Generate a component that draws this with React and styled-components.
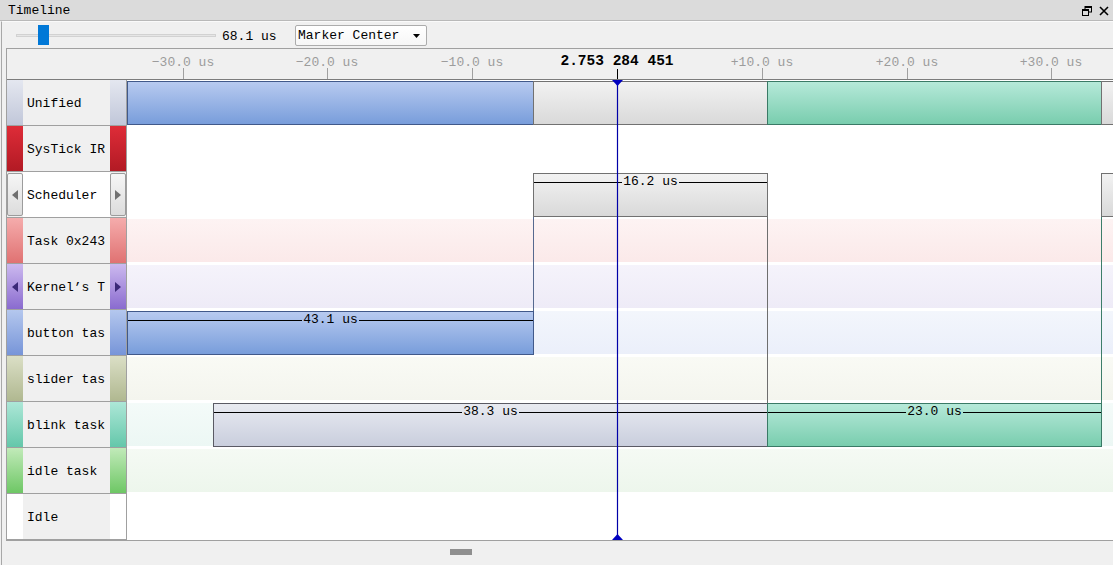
import styled, { createGlobalStyle } from 'styled-components';

const GlobalStyle = createGlobalStyle`
  html, body { margin: 0; padding: 0; background: #f0f0f0; }
  body {
    font-family: 'Liberation Mono', 'DejaVu Sans Mono', monospace;
    font-size: 13px;
    color: #000;
  }
  * { box-sizing: border-box; }
`;

// timeline scale: 10 us = 144.8 px, marker sits at canvas x 490
const PX_PER_US = 14.483;
const ORIGIN = 490;
const CANVAS_W = 986;
const xOf = (us) => Math.round(ORIGIN + us * PX_PER_US);

const BAR_COLORS = {
  blue: { top: '#b7caf0', bottom: '#789ddb', border: '#41598a' },
  grey: { top: '#f2f2f2', bottom: '#d9d9d9', border: '#717171' },
  teal: { top: '#b6e9d9', bottom: '#79cdae', border: '#3a7a66' },
  slate: { top: '#e8eaf1', bottom: '#c9cedd', border: '#5a5a64' },
};

const LANES = [
  {
    label: 'Unified',
    strip: ['#e4e7f0', '#c1c7d9'],
    bars: [
      { from: -48.9, to: -5.8, kind: 'blue' },
      { from: -5.8, to: 10.35, kind: 'grey' },
      { from: 10.35, to: 33.4, kind: 'teal' },
      { from: 33.4, to: 50, kind: 'grey' },
    ],
  },
  { label: 'SysTick IR', strip: ['#de2c38', '#b21a24'] },
  {
    label: 'Scheduler',
    boxed: true,
    arrows: '#707070',
    light: true,
    bars: [
      { from: -5.8, to: 10.35, kind: 'grey', text: '16.2 us' },
      { from: 33.4, to: 50, kind: 'grey' },
    ],
  },
  { label: 'Task 0x243', strip: ['#f5acac', '#e07272'], band: ['#fdf3f3', '#fbe9e9'] },
  {
    label: 'Kernel’s T',
    strip: ['#ccb9ef', '#8a6bcf'],
    arrows: '#3a2878',
    band: ['#f5f3fb', '#eeebf7'],
  },
  {
    label: 'button tas',
    strip: ['#b4c7ee', '#7795d8'],
    band: ['#f3f6fc', '#ebeffa'],
    bars: [{ from: -48.9, to: -5.8, kind: 'blue', text: '43.1 us' }],
  },
  { label: 'slider tas', strip: ['#dbdfc6', '#b0b890'], band: ['#f9faf5', '#f4f5ee'] },
  {
    label: 'blink task',
    strip: ['#ade7d7', '#64c7aa'],
    band: ['#f4fbf9', '#ecf7f4'],
    bars: [
      { from: -27.9, to: 10.35, kind: 'slate', text: '38.3 us' },
      { from: 10.35, to: 33.4, kind: 'teal', text: '23.0 us' },
    ],
  },
  { label: 'idle task', strip: ['#c1eab9', '#6ec765'], band: ['#f5faf4', '#edf6ec'] },
  { label: 'Idle', strip: ['#ffffff', '#ffffff'] },
];

const TICKS = [-30, -20, -10, 10, 20, 30];
const ROW_H = 46;

// connectors drawn from the scheduler slice down to the task that took over
const CONNECTORS = [
  { at: -5.8, from: 2 * ROW_H + 45, to: 5 * ROW_H + 1, color: '#56698f' },
  { at: 10.35, from: 2 * ROW_H + 45, to: 7 * ROW_H + 1, color: '#6e6e6e' },
  { at: 33.4, from: 2 * ROW_H + 45, to: 7 * ROW_H + 1, color: '#3d7d6a' },
];

function formatTick(t) {
  const sign = t < 0 ? '−' : '+';
  return `${sign}${Math.abs(t).toFixed(1)} us`;
}

function Arrow({ dir, color }) {
  return (
    <svg width="6" height="10" viewBox="0 0 6 10">
      {dir === 'left' ? (
        <polygon points="6,0 6,10 0,5" fill={color} />
      ) : (
        <polygon points="0,0 0,10 6,5" fill={color} />
      )}
    </svg>
  );
}

function Bar({ bar }) {
  // only the visible part is drawn, so the caption centres on what shows
  const left = Math.max(xOf(bar.from), 0);
  const right = Math.min(xOf(bar.to), CANVAS_W + 20);
  return (
    <BarBox $kind={bar.kind} style={{ left, width: right - left + 1 }}>
      {bar.text && (
        <BarCaption>
          <CaptionRule />
          <CaptionText>{bar.text}</CaptionText>
          <CaptionRule />
        </BarCaption>
      )}
    </BarBox>
  );
}

export default function App() {
  return (
    <>
      <GlobalStyle />
      <Window>
        <TitleBar>
          <TitleText>Timeline</TitleText>
          <TitleIcons>
            <svg width="10" height="10" viewBox="0 0 10 10">
              <rect x="3" y="0.5" width="6.5" height="5.5" fill="none" stroke="#000" strokeWidth="1" />
              <rect x="3" y="0" width="7" height="2" fill="#000" />
              <rect x="0.5" y="3.5" width="6" height="6" fill="#dcdcdc" stroke="#000" strokeWidth="1" />
              <rect x="0" y="3" width="7" height="2" fill="#000" />
            </svg>
            <svg width="10" height="10" viewBox="0 0 10 10">
              <path d="M1 1 L9 9 M9 1 L1 9" stroke="#000" strokeWidth="1.6" />
            </svg>
          </TitleIcons>
        </TitleBar>

        <Body>
          <Toolbar>
            <Slider>
              <SliderTrack />
              <SliderHandle />
            </Slider>
            <ZoomValue>68.1 us</ZoomValue>
            <Combo>
              <span>Marker Center</span>
              <svg width="7" height="4" viewBox="0 0 7 4">
                <polygon points="0,0 7,0 3.5,4" fill="#000" />
              </svg>
            </Combo>
          </Toolbar>

          <Frame>
            <Ruler>
              <RulerSpacer />
              <RulerScale>
                {TICKS.map((t) => (
                  <div key={t}>
                    <RulerLabel style={{ left: xOf(t) }}>{formatTick(t)}</RulerLabel>
                    <RulerTick style={{ left: xOf(t) }} />
                  </div>
                ))}
                <MarkerTime style={{ left: ORIGIN }}>2.753 284 451</MarkerTime>
                <RulerTick $dark style={{ left: ORIGIN }} />
              </RulerScale>
            </Ruler>

            <Rows>
              <LabelColumn>
                {LANES.map((lane) => (
                  <LabelRow key={lane.label}>
                    <Strip $top={lane.strip?.[0]} $bottom={lane.strip?.[1]} $boxed={lane.boxed}>
                      {lane.arrows && <Arrow dir="left" color={lane.arrows} />}
                    </Strip>
                    <LabelText $light={lane.light}>{lane.label}</LabelText>
                    <Strip $top={lane.strip?.[0]} $bottom={lane.strip?.[1]} $boxed={lane.boxed}>
                      {lane.arrows && <Arrow dir="right" color={lane.arrows} />}
                    </Strip>
                  </LabelRow>
                ))}
              </LabelColumn>

              <Canvas>
                {LANES.map((lane) => (
                  <Lane key={lane.label}>
                    <Band $tint={lane.band} />
                    {(lane.bars || []).map((bar) => (
                      <Bar key={bar.from} bar={bar} />
                    ))}
                  </Lane>
                ))}
                <Overlay width={CANVAS_W} height={ROW_H * 10}>
                  {CONNECTORS.map((c) => (
                    <line
                      key={c.at}
                      x1={xOf(c.at) + 0.5}
                      x2={xOf(c.at) + 0.5}
                      y1={c.from}
                      y2={c.to}
                      stroke={c.color}
                      strokeWidth="1"
                    />
                  ))}
                  <line
                    x1={ORIGIN + 0.5}
                    x2={ORIGIN + 0.5}
                    y1="0"
                    y2={ROW_H * 10}
                    stroke="#0000a8"
                    strokeWidth="1.2"
                  />
                  <polygon
                    points={`${ORIGIN - 5},0 ${ORIGIN + 6},0 ${ORIGIN + 0.5},6`}
                    fill="#0000c0"
                  />
                  <polygon
                    points={`${ORIGIN - 5},${ROW_H * 10} ${ORIGIN + 6},${ROW_H * 10} ${ORIGIN + 0.5},${ROW_H * 10 - 6}`}
                    fill="#0000c0"
                  />
                </Overlay>
              </Canvas>
            </Rows>
          </Frame>

          <BottomBar>
            <Grip />
          </BottomBar>
        </Body>
      </Window>
    </>
  );
}

const Window = styled.div`
  width: 1113px;
  height: 565px;
  display: flex;
  flex-direction: column;
  background: #f0f0f0;
  overflow: hidden;
`;

const TitleBar = styled.div`
  height: 21px;
  display: flex;
  align-items: center;
  justify-content: space-between;
  padding: 2px 4px 0 8px;
  background: #dbdbdb;
  border-bottom: 1px solid #b9b9b9;
`;

const TitleText = styled.span`
  font-size: 13px;
  line-height: 18px;
`;

const TitleIcons = styled.div`
  display: flex;
  align-items: center;
  gap: 7px;
`;

const Body = styled.div`
  flex: 1;
  display: flex;
  flex-direction: column;
  margin-left: 1px;
  border-left: 1px solid #a8a8a8;
  border-top: 1px solid #fafafa;
  min-height: 0;
`;

const Toolbar = styled.div`
  height: 26px;
  display: flex;
  align-items: center;
  padding-left: 14px;
`;

const Slider = styled.div`
  position: relative;
  width: 200px;
  height: 20px;
  display: flex;
  align-items: center;
`;

const SliderTrack = styled.div`
  width: 100%;
  height: 3px;
  background: #e6e6e6;
  border: 1px solid #d2d2d2;
`;

const SliderHandle = styled.div`
  position: absolute;
  left: 22px;
  top: 0;
  width: 11px;
  height: 20px;
  background: #0078d7;
`;

const ZoomValue = styled.span`
  margin-left: 6px;
  padding-top: 2px;
  width: 73px;
`;

const Combo = styled.div`
  width: 132px;
  height: 21px;
  display: flex;
  align-items: center;
  justify-content: space-between;
  padding: 1px 6px 0 2px;
  background: linear-gradient(#ffffff, #f6f6f6);
  border: 1px solid #acacac;
  border-radius: 2px;
`;

const Frame = styled.div`
  margin-left: 4px;
  display: flex;
  flex-direction: column;
  border-left: 1px solid #a0a0a0;
  border-top: 1px solid #a0a0a0;
  border-bottom: 1px solid #a0a0a0;
`;

const Ruler = styled.div`
  height: 31px;
  display: flex;
  border-bottom: 1px solid #7c7c7c;
`;

const RulerSpacer = styled.div`
  width: 120px;
`;

const RulerScale = styled.div`
  position: relative;
  flex: 1;
  overflow: hidden;
`;

const RulerLabel = styled.span`
  position: absolute;
  top: 6px;
  transform: translateX(-50%);
  color: #9c9c9c;
  white-space: nowrap;
`;

const MarkerTime = styled.span`
  position: absolute;
  top: 4px;
  transform: translateX(-50%);
  font-weight: bold;
  font-size: 14.5px;
  white-space: nowrap;
`;

const RulerTick = styled.div`
  position: absolute;
  bottom: 0;
  width: 1px;
  height: ${(p) => (p.$dark ? 10 : 11)}px;
  background: ${(p) => (p.$dark ? '#000' : '#a0a0a0')};
`;

const Rows = styled.div`
  display: flex;
  height: ${ROW_H * 10}px;
`;

const LabelColumn = styled.div`
  width: 120px;
  display: flex;
  flex-direction: column;
  border-right: 1px solid #a0a0a0;
`;

const LabelRow = styled.div`
  height: ${ROW_H}px;
  display: flex;
  border-bottom: 1px solid #a0a0a0;
`;

const Strip = styled.div`
  width: 16px;
  display: flex;
  align-items: center;
  justify-content: center;
  background: ${(p) =>
    p.$boxed ? 'linear-gradient(#f6f6f6, #dcdcdc)' : `linear-gradient(${p.$top}, ${p.$bottom})`};
  border: ${(p) => (p.$boxed ? '1px solid #9c9c9c' : 'none')};
  border-radius: ${(p) => (p.$boxed ? '2px' : '0')};
  margin: ${(p) => (p.$boxed ? '1px 0' : '0')};
`;

const LabelText = styled.div`
  width: 87px;
  display: flex;
  align-items: center;
  padding: 2px 0 0 4px;
  background: ${(p) => (p.$light ? '#ffffff' : '#f0f0f0')};
  white-space: nowrap;
  overflow: hidden;
`;

const Canvas = styled.div`
  position: relative;
  flex: 1;
  display: flex;
  flex-direction: column;
  background: #ffffff;
  overflow: hidden;
`;

const Lane = styled.div`
  position: relative;
  height: ${ROW_H}px;
  flex: none;
  padding-top: 1px;
`;

const Band = styled.div`
  height: 43px;
  background: ${(p) => (p.$tint ? `linear-gradient(${p.$tint[0]}, ${p.$tint[1]})` : 'transparent')};
`;

const BarBox = styled.div`
  position: absolute;
  top: 1px;
  height: 44px;
  background: ${(p) =>
    `linear-gradient(${BAR_COLORS[p.$kind].top}, ${BAR_COLORS[p.$kind].bottom})`};
  border: 1px solid ${(p) => BAR_COLORS[p.$kind].border};
`;

const BarCaption = styled.div`
  position: absolute;
  top: 1px;
  left: 0;
  right: 0;
  height: 14px;
  display: flex;
  align-items: center;
`;

const CaptionRule = styled.div`
  flex: 1;
  height: 1px;
  background: #000;
`;

const CaptionText = styled.span`
  padding: 0 1px;
  line-height: 14px;
  white-space: nowrap;
`;

const Overlay = styled.svg`
  position: absolute;
  left: 0;
  top: 0;
  pointer-events: none;
`;

const BottomBar = styled.div`
  flex: 1;
  display: flex;
  align-items: flex-start;
  padding: 8px 0 0 448px;
`;

const Grip = styled.div`
  width: 22px;
  height: 6px;
  background: #8f8f8f;
`;
